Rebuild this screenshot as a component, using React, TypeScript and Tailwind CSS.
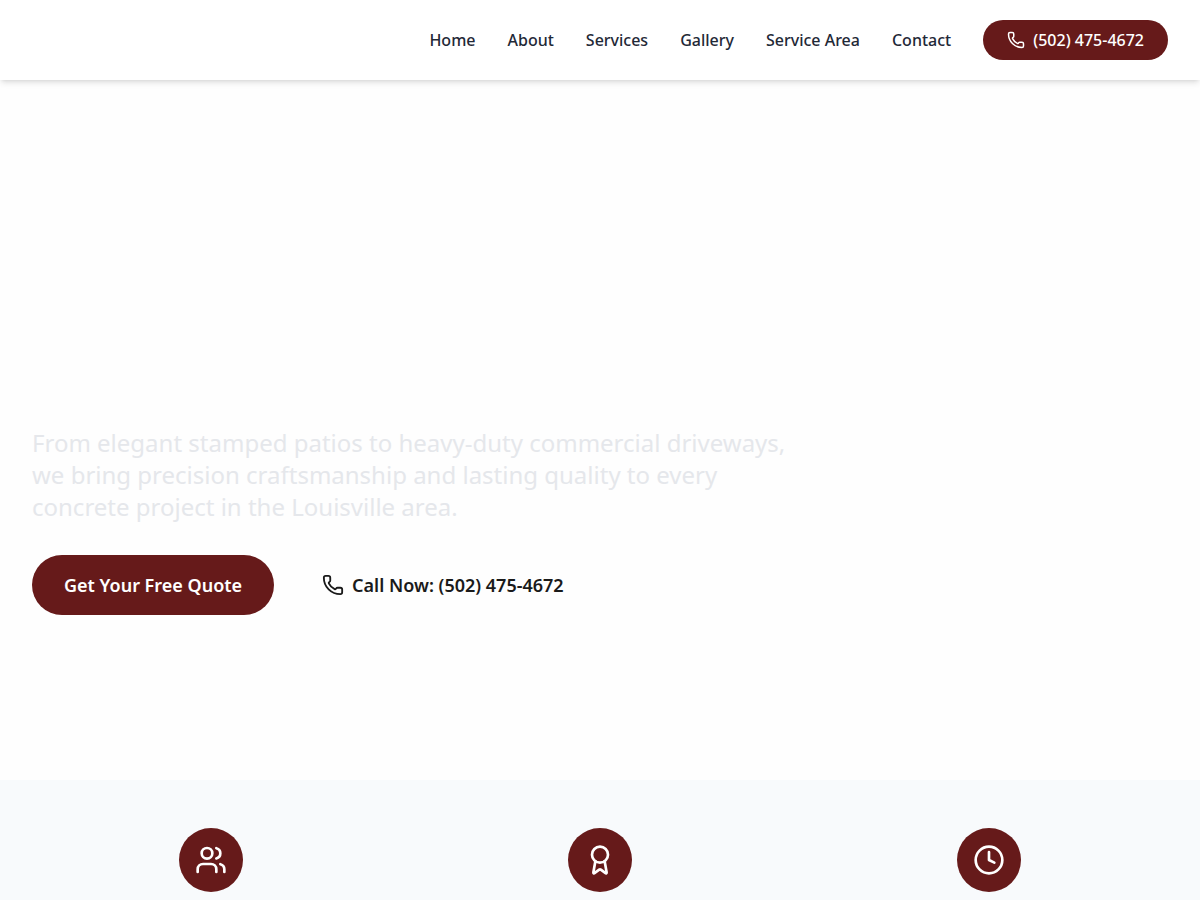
import React from 'react';
import { Award, Clock, Phone, Users } from 'lucide-react';

const navLinks = [
  { label: 'Home', href: '#home' },
  { label: 'About', href: '#about' },
  { label: 'Services', href: '#services' },
  { label: 'Gallery', href: '#gallery' },
  { label: 'Service Area', href: '#service-area' },
  { label: 'Contact', href: '#contact' },
];

const features = [Users, Award, Clock];

function Header() {
  return (
    <header className="sticky top-0 z-50 bg-white shadow-md">
      <div className="max-w-7xl mx-auto h-20 px-8 flex items-center justify-end">
        <nav className="flex items-center gap-8">
          {navLinks.map((link) => (
            <a
              key={link.href}
              href={link.href}
              className="font-medium text-[#1f2937] hover:text-[#661a1a] transition-colors"
            >
              {link.label}
            </a>
          ))}
          <a
            href="tel:5024754672"
            className="flex items-center gap-2 px-6 py-2 rounded-full bg-[#661a1a] text-white font-medium"
          >
            <Phone size={18} />
            (502) 475-4672
          </a>
        </nav>
      </div>
    </header>
  );
}

function Hero() {
  return (
    <section id="home" className="min-h-[700px] flex flex-col justify-end pb-[165px]">
      <div className="w-full max-w-7xl mx-auto px-8">
        <p className="max-w-3xl mb-8 text-2xl text-gray-200">
          From elegant stamped patios to heavy-duty commercial driveways, we bring precision
          craftsmanship and lasting quality to every concrete project in the Louisville area.
        </p>
        <div className="flex flex-wrap gap-4">
          <a
            href="#contact"
            className="px-8 py-4 rounded-full bg-[#661a1a] text-white text-lg leading-7 font-semibold"
          >
            Get Your Free Quote
          </a>
          <a
            href="tel:5024754672"
            className="flex items-center gap-2 px-8 py-4 rounded-full text-[#1a1a1a] text-lg leading-7 font-semibold"
          >
            <Phone size={22} />
            Call Now: (502) 475-4672
          </a>
        </div>
      </div>
    </section>
  );
}

function Features() {
  return (
    <section className="bg-[#f8fafc] py-12">
      <div className="max-w-7xl mx-auto px-8 grid grid-cols-3 gap-8">
        {features.map((Icon, i) => (
          <div key={i} className="flex justify-center">
            <div className="w-16 h-16 rounded-full bg-[#661a1a] text-white flex items-center justify-center">
              <Icon size={32} />
            </div>
          </div>
        ))}
      </div>
    </section>
  );
}

export default function App() {
  return (
    <div className="min-h-screen bg-[#fefefe] font-['Noto_Sans',sans-serif]">
      <Header />
      <Hero />
      <Features />
    </div>
  );
}
